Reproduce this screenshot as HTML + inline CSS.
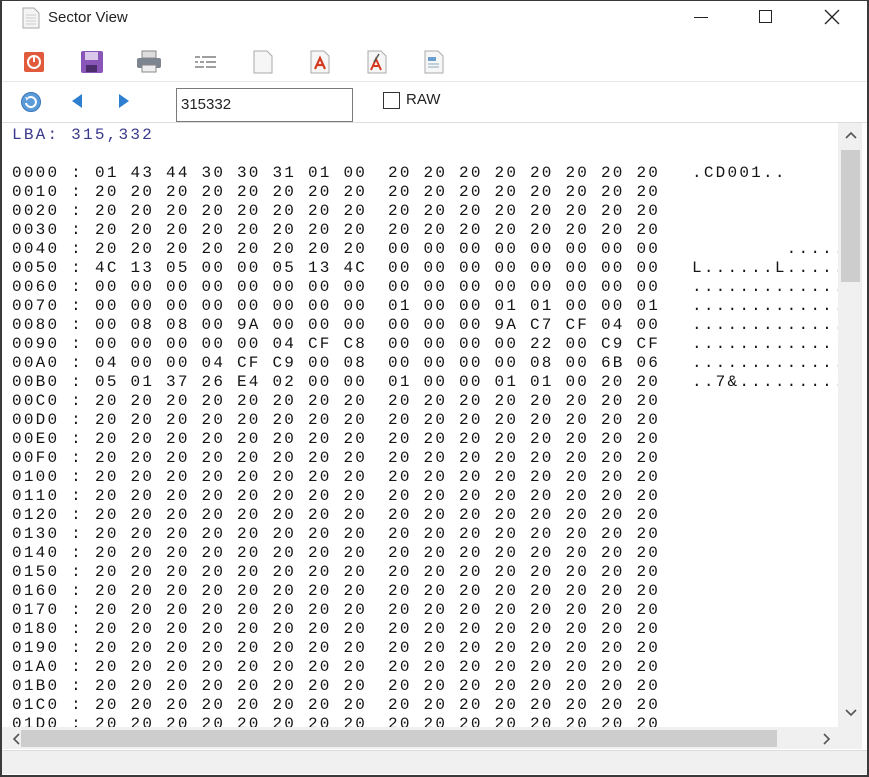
<!DOCTYPE html>
<html><head><meta charset="utf-8"><style>
*{margin:0;padding:0;box-sizing:border-box}
body{width:869px;height:777px;background:#fff;position:relative;overflow:hidden;font-family:"Liberation Sans",sans-serif}
.frame{position:absolute;left:0;top:0;width:869px;height:777px;border:2px solid #3a3a3a;border-top:1px solid #3a3a3a}
.abs{position:absolute}
.title{left:48px;top:9px;font-size:15px;color:#222}
.tb{left:2px;top:40px;width:865px;height:42px;border-bottom:1px solid #e6e6e6}
.nav{left:2px;top:83px;width:865px;height:40px;border-bottom:1px solid #ddd}
.content{position:absolute;left:2px;top:123px;width:836px;height:604px;overflow:hidden;background:#fff}
.row{position:absolute;left:0;width:900px;height:19px;font-family:"Liberation Mono",monospace;font-size:16px;letter-spacing:2.23px;color:#151515;white-space:pre;line-height:19px}
.row span{position:absolute;top:0}
.row span:nth-child(1){left:10px}
.row span:nth-child(2){left:93px}
.row span:nth-child(3){left:386px}
.row span:nth-child(4){left:690px}
.vs{left:838px;top:123px;width:24px;height:604px;background:#f0f0f0}
.hs{left:2px;top:727px;width:860px;height:22px;background:#f0f0f0}
.status{left:2px;top:750px;width:865px;height:24px;background:#f0f0f0;border-top:1px solid #ddd}
</style></head><body>
<svg class="abs" style="left:22px;top:7px" width="18" height="22"><path d="M1 1h11l5 5v15H1z" fill="#f4f4f4" stroke="#aaa"/><path d="M4 8h10M4 11h10M4 14h10M4 17h10" stroke="#ccc"/></svg>
<div class="abs title">Sector View</div>
<div class="abs" style="left:694px;top:17px;width:14px;height:1px;background:#222"></div>
<div class="abs" style="left:759px;top:10px;width:13px;height:13px;border:1px solid #222"></div>
<svg class="abs" style="left:824px;top:9px" width="16" height="16"><path d="M1 1L15 15M15 1L1 15" stroke="#222" stroke-width="1.3"/></svg>
<div class="abs tb"></div>
<svg class="abs" style="left:23px;top:51px" width="22" height="22"><rect x="1" y="1" width="20" height="20" rx="2" fill="#e25a3c"/><circle cx="11" cy="11" r="6" fill="none" stroke="#fff" stroke-width="2"/><rect x="10" y="4" width="2" height="7" fill="#fff"/></svg>
<svg class="abs" style="left:80px;top:50px" width="24" height="24"><rect x="1" y="1" width="22" height="22" rx="2" fill="#8a55b8"/><rect x="5" y="2" width="13" height="8" fill="#d9c8ea"/><rect x="6" y="15" width="11" height="7" fill="#4a2d6a"/></svg>
<svg class="abs" style="left:136px;top:50px" width="26" height="24"><rect x="6" y="1" width="14" height="7" fill="#ddd" stroke="#888"/><rect x="1" y="8" width="24" height="10" rx="2" fill="#7d8590"/><rect x="6" y="15" width="14" height="7" fill="#eee" stroke="#888"/></svg>
<svg class="abs" style="left:194px;top:55px" width="24" height="14"><path d="M1 2h5M8 2h14M1 7h3M6 7h4M12 7h10M1 12h9M12 12h10" stroke="#666" stroke-width="1.3"/></svg>
<svg class="abs" style="left:253px;top:50px" width="20" height="24"><path d="M1 1h13l5 5v17H1z" fill="#f6f6f6" stroke="#aaa"/></svg>
<svg class="abs" style="left:310px;top:50px" width="20" height="24"><path d="M1 1h13l5 5v17H1z" fill="#f6f6f6" stroke="#aaa"/><path d="M5 19l5-11 5 11M7 15h6" stroke="#d43b1f" stroke-width="2.2" fill="none"/></svg>
<svg class="abs" style="left:367px;top:50px" width="20" height="24"><path d="M1 1h13l5 5v17H1z" fill="#f6f6f6" stroke="#aaa"/><path d="M4 20l5-11 5 11M6 16h6" stroke="#d43b1f" stroke-width="2" fill="none"/><path d="M12 4L7 12" stroke="#555" stroke-width="1.5"/></svg>
<svg class="abs" style="left:424px;top:50px" width="20" height="24"><path d="M1 1h13l5 5v17H1z" fill="#f6f6f6" stroke="#aaa"/><rect x="4" y="7" width="8" height="4" fill="#6a9fd0"/><path d="M4 14h11M4 17h11" stroke="#8ab"/></svg>
<div class="abs nav"></div>
<svg class="abs" style="left:20px;top:91px" width="22" height="22"><circle cx="11" cy="11" r="9.5" fill="#5b9bd8" stroke="#3a78b8"/><path d="M6 12a5 5 0 1 0 2-5" stroke="#fff" stroke-width="2" fill="none"/><path d="M5 6l3 1-1 3" fill="#fff"/></svg>
<svg class="abs" style="left:70px;top:93px" width="14" height="16"><path d="M12 1L2 8l10 7z" fill="#2f7fd0"/></svg>
<svg class="abs" style="left:117px;top:93px" width="14" height="16"><path d="M2 1l10 7-10 7z" fill="#2f7fd0"/></svg>
<div class="abs" style="left:176px;top:88px;width:177px;height:34px;border:1px solid #7a7a7a;background:#fff;font-size:15px;padding:7px 0 0 4px;color:#222">315332</div>
<div class="abs" style="left:383px;top:92px;width:17px;height:17px;border:1px solid #333;background:#fff"></div>
<div class="abs" style="left:406px;top:91px;font-size:15px;color:#222">RAW</div>
<div class="content">
<div class="row" style="top:3px;color:#3a3a8c"><span>LBA: 315,332</span></div>
<div class="row" style="top:41px"><span>0000 :</span><span>01 43 44 30 30 31 01 00</span><span>20 20 20 20 20 20 20 20</span><span>.CD001..</span></div>
<div class="row" style="top:60px"><span>0010 :</span><span>20 20 20 20 20 20 20 20</span><span>20 20 20 20 20 20 20 20</span></div>
<div class="row" style="top:79px"><span>0020 :</span><span>20 20 20 20 20 20 20 20</span><span>20 20 20 20 20 20 20 20</span></div>
<div class="row" style="top:98px"><span>0030 :</span><span>20 20 20 20 20 20 20 20</span><span>20 20 20 20 20 20 20 20</span></div>
<div class="row" style="top:117px"><span>0040 :</span><span>20 20 20 20 20 20 20 20</span><span>00 00 00 00 00 00 00 00</span><span>        ........</span></div>
<div class="row" style="top:136px"><span>0050 :</span><span>4C 13 05 00 00 05 13 4C</span><span>00 00 00 00 00 00 00 00</span><span>L......L........</span></div>
<div class="row" style="top:155px"><span>0060 :</span><span>00 00 00 00 00 00 00 00</span><span>00 00 00 00 00 00 00 00</span><span>................</span></div>
<div class="row" style="top:174px"><span>0070 :</span><span>00 00 00 00 00 00 00 00</span><span>01 00 00 01 01 00 00 01</span><span>................</span></div>
<div class="row" style="top:193px"><span>0080 :</span><span>00 08 08 00 9A 00 00 00</span><span>00 00 00 9A C7 CF 04 00</span><span>................</span></div>
<div class="row" style="top:212px"><span>0090 :</span><span>00 00 00 00 00 04 CF C8</span><span>00 00 00 00 22 00 C9 CF</span><span>............'...</span></div>
<div class="row" style="top:231px"><span>00A0 :</span><span>04 00 00 04 CF C9 00 08</span><span>00 00 00 00 08 00 6B 06</span><span>................</span></div>
<div class="row" style="top:250px"><span>00B0 :</span><span>05 01 37 26 E4 02 00 00</span><span>01 00 00 01 01 00 20 20</span><span>..7&amp;............</span></div>
<div class="row" style="top:269px"><span>00C0 :</span><span>20 20 20 20 20 20 20 20</span><span>20 20 20 20 20 20 20 20</span></div>
<div class="row" style="top:288px"><span>00D0 :</span><span>20 20 20 20 20 20 20 20</span><span>20 20 20 20 20 20 20 20</span></div>
<div class="row" style="top:307px"><span>00E0 :</span><span>20 20 20 20 20 20 20 20</span><span>20 20 20 20 20 20 20 20</span></div>
<div class="row" style="top:326px"><span>00F0 :</span><span>20 20 20 20 20 20 20 20</span><span>20 20 20 20 20 20 20 20</span></div>
<div class="row" style="top:345px"><span>0100 :</span><span>20 20 20 20 20 20 20 20</span><span>20 20 20 20 20 20 20 20</span></div>
<div class="row" style="top:364px"><span>0110 :</span><span>20 20 20 20 20 20 20 20</span><span>20 20 20 20 20 20 20 20</span></div>
<div class="row" style="top:383px"><span>0120 :</span><span>20 20 20 20 20 20 20 20</span><span>20 20 20 20 20 20 20 20</span></div>
<div class="row" style="top:402px"><span>0130 :</span><span>20 20 20 20 20 20 20 20</span><span>20 20 20 20 20 20 20 20</span></div>
<div class="row" style="top:421px"><span>0140 :</span><span>20 20 20 20 20 20 20 20</span><span>20 20 20 20 20 20 20 20</span></div>
<div class="row" style="top:440px"><span>0150 :</span><span>20 20 20 20 20 20 20 20</span><span>20 20 20 20 20 20 20 20</span></div>
<div class="row" style="top:459px"><span>0160 :</span><span>20 20 20 20 20 20 20 20</span><span>20 20 20 20 20 20 20 20</span></div>
<div class="row" style="top:478px"><span>0170 :</span><span>20 20 20 20 20 20 20 20</span><span>20 20 20 20 20 20 20 20</span></div>
<div class="row" style="top:497px"><span>0180 :</span><span>20 20 20 20 20 20 20 20</span><span>20 20 20 20 20 20 20 20</span></div>
<div class="row" style="top:516px"><span>0190 :</span><span>20 20 20 20 20 20 20 20</span><span>20 20 20 20 20 20 20 20</span></div>
<div class="row" style="top:535px"><span>01A0 :</span><span>20 20 20 20 20 20 20 20</span><span>20 20 20 20 20 20 20 20</span></div>
<div class="row" style="top:554px"><span>01B0 :</span><span>20 20 20 20 20 20 20 20</span><span>20 20 20 20 20 20 20 20</span></div>
<div class="row" style="top:573px"><span>01C0 :</span><span>20 20 20 20 20 20 20 20</span><span>20 20 20 20 20 20 20 20</span></div>
<div class="row" style="top:592px"><span>01D0 :</span><span>20 20 20 20 20 20 20 20</span><span>20 20 20 20 20 20 20 20</span></div>
</div>
<div class="abs vs"></div>
<div class="abs" style="left:841px;top:150px;width:19px;height:132px;background:#cdcdcd"></div>
<svg class="abs" style="left:845px;top:131px" width="12" height="8"><path d="M1 7l5-5 5 5" stroke="#555" stroke-width="1.6" fill="none"/></svg>
<svg class="abs" style="left:845px;top:709px" width="12" height="8"><path d="M1 1l5 5 5-5" stroke="#555" stroke-width="1.6" fill="none"/></svg>
<div class="abs hs"></div>
<div class="abs" style="left:21px;top:730px;width:756px;height:17px;background:#cdcdcd"></div>
<svg class="abs" style="left:12px;top:733px" width="8" height="12"><path d="M7 1L2 6l5 5" stroke="#555" stroke-width="1.6" fill="none"/></svg>
<svg class="abs" style="left:823px;top:733px" width="8" height="12"><path d="M1 1l5 5-5 5" stroke="#555" stroke-width="1.6" fill="none"/></svg>
<div class="abs status"></div>
<div class="frame"></div>
</body></html>
